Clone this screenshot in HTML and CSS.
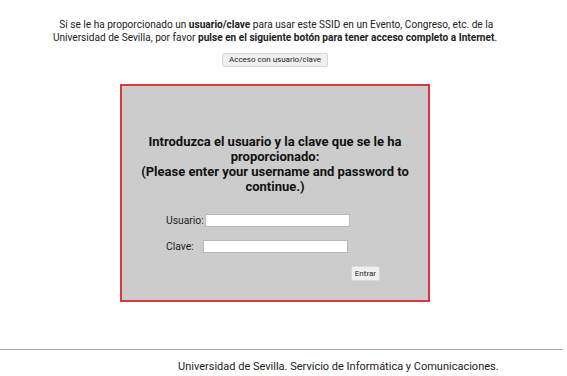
FILE: index.html
```html
<!DOCTYPE html>
<html lang="es">
<head>
    <meta charset="UTF-8">
    <meta name="viewport" content="width=device-width, initial-scale=1.0">
    <title>Acceso a Internet</title>
    <link rel="stylesheet" href="styles.css">
</head>
<body>

<div class="page">
    <p class="intro">
        &nbsp;Si se le ha proporcionado un <b>usuario/clave</b> para usar este SSID en un Evento, Congreso, etc. de la<br>
        Universidad de Sevilla, por favor <b>pulse en el siguiente botón para tener acceso completo a Internet</b>.
    </p>
    <div class="access">
        <button type="button" class="btn">Acceso con usuario/clave</button>
    </div>

    <div id="login-box" class="login-box">
        <h2>Introduzca el usuario y la clave que se le ha proporcionado:<br>(Please enter your username and password to continue.)</h2>
        <form id="login-form" action="/login" method="post">
            <div class="row">
                <label for="user">Usuario:</label>
                <input type="text" id="user" name="user">
            </div>
            <div class="row">
                <label for="pass" class="short">Clave:</label>
                <input type="password" id="pass" name="pass">
            </div>
            <div class="submit-row">
                <button type="submit" class="btn enter">Entrar</button>
            </div>
        </form>
    </div>
</div>

<hr class="rule">
<div class="footer">Universidad de Sevilla. Servicio de Informática y Comunicaciones.</div>

</body>
</html>
```

FILE: styles.css
```css
body {
    font-family: Roboto, "Liberation Sans", Arial, sans-serif;
    color: #222222;
    margin: 0;
    padding: 0;
    background-color: #ffffff;
}

.page {
    width: 550px;
    text-align: center;
}

.intro {
    font-size: 10.1px;
    line-height: 13px;
    margin: 0;
    padding-top: 18px;
}

.access {
    display: flex;
    justify-content: center;
    margin-top: 9px;
}

.btn {
    font-family: Roboto, "Liberation Sans", Arial, sans-serif;
    font-size: 8px;
    color: #222222;
    background-color: #f0f0f0;
    border: 1px solid #d8d8d8;
    border-radius: 2px;
    padding: 1px 6px;
    height: 14px;
    line-height: 10px;
}

.login-box {
    width: 306px;
    margin: 17px 0 0 120px;
    background-color: #cccccc;
    border: 2px solid #d6383c;
    padding: 48px 0 19px 0;
    text-align: left;
}

.login-box h2 {
    font-size: 13px;
    line-height: 15px;
    font-weight: bold;
    text-align: center;
    margin: 0 0 20px 0;
    color: #111111;
}

.row {
    display: flex;
    align-items: center;
    padding-left: 44px;
    margin-bottom: 13px;
    font-size: 10.3px;
}

.row label {
    margin-right: 1px;
}

.row label.short {
    width: 36px;
}

.row input {
    width: 145px;
    height: 13px;
    box-sizing: border-box;
    border: 1px solid #b8b8b8;
    background-color: #ffffff;
    padding: 0 2px;
}

.submit-row {
    display: flex;
    justify-content: flex-end;
    padding-right: 48px;
}

.btn.enter {
    padding: 1px 3px;
    height: 15px;
}

.rule {
    width: 563px;
    margin: 47px 0 0 0;
    border: none;
    border-top: 1px solid #a8a8a8;
    height: 0;
}

.footer {
    font-size: 11px;
    line-height: 13px;
    padding: 10px 0 0 178px;
    color: #222222;
}
```
